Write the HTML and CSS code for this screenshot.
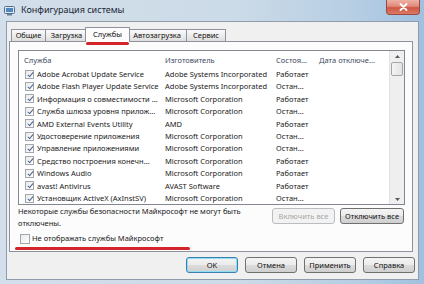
FILE: index.html
```html
<!DOCTYPE html>
<html>
<head>
<meta charset="utf-8">
<link rel="stylesheet" href="styles.css">
</head>
<body>
<div class="window">
  <div class="titlebar">
    <svg class="appicon" width="11" height="10" viewBox="0 0 11 10">
      <rect x="0.5" y="0.5" width="10" height="7" rx="1" fill="#dfe9f3" stroke="#51708f"/>
      <rect x="2" y="2" width="7" height="4" fill="#4f86c0"/>
      <rect x="3" y="8" width="5" height="1.5" fill="#6c7f93"/>
    </svg>
    <span class="title">Конфигурация системы</span>
    <div class="close">
      <svg width="9" height="8" viewBox="0 0 9 8"><path d="M1.5 1 L7.5 7 M7.5 1 L1.5 7" stroke="#ffffff" stroke-width="1.8" stroke-linecap="round"/></svg>
    </div>
  </div>
  <div class="client">
    <div class="tabs">
      <div class="tab t1">Общие</div>
      <div class="tab t2">Загрузка</div>
      <div class="tab t3 active">Службы<span class="mark"></span></div>
      <div class="tab t4">Автозагрузка</div>
      <div class="tab t5">Сервис</div>
    </div>
    <div class="panel">
      <div class="list">
        <div class="list-main">
          <div class="row head">
            <span class="c1">Служба</span><span class="c2">Изготовитель</span><span class="c3">Состоя...</span><span class="c4">Дата отключе...</span>
          </div>
          <div class="rows">
            <div class="row"><span class="c1"><i class="cb"></i>Adobe Acrobat Update Service</span><span class="c2">Adobe Systems Incorporated</span><span class="c3">Работает</span><span class="c4"></span></div>
            <div class="row"><span class="c1"><i class="cb"></i>Adobe Flash Player Update Service</span><span class="c2">Adobe Systems Incorporated</span><span class="c3">Остан...</span><span class="c4"></span></div>
            <div class="row"><span class="c1"><i class="cb"></i>Информация о совместимости ...</span><span class="c2">Microsoft Corporation</span><span class="c3">Работает</span><span class="c4"></span></div>
            <div class="row"><span class="c1"><i class="cb"></i>Служба шлюза уровня прилож...</span><span class="c2">Microsoft Corporation</span><span class="c3">Остан...</span><span class="c4"></span></div>
            <div class="row"><span class="c1"><i class="cb"></i>AMD External Events Utility</span><span class="c2">AMD</span><span class="c3">Работает</span><span class="c4"></span></div>
            <div class="row"><span class="c1"><i class="cb"></i>Удостоверение приложения</span><span class="c2">Microsoft Corporation</span><span class="c3">Остан...</span><span class="c4"></span></div>
            <div class="row"><span class="c1"><i class="cb"></i>Управление приложениями</span><span class="c2">Microsoft Corporation</span><span class="c3">Остан...</span><span class="c4"></span></div>
            <div class="row"><span class="c1"><i class="cb"></i>Средство построения конечн...</span><span class="c2">Microsoft Corporation</span><span class="c3">Работает</span><span class="c4"></span></div>
            <div class="row"><span class="c1"><i class="cb"></i>Windows Audio</span><span class="c2">Microsoft Corporation</span><span class="c3">Работает</span><span class="c4"></span></div>
            <div class="row"><span class="c1"><i class="cb"></i>avast! Antivirus</span><span class="c2">AVAST Software</span><span class="c3">Работает</span><span class="c4"></span></div>
            <div class="row"><span class="c1"><i class="cb"></i>Установщик ActiveX (AxInstSV)</span><span class="c2">Microsoft Corporation</span><span class="c3">Остан...</span><span class="c4"></span></div>
          </div>
        </div>
        <div class="scrollbar">
          <div class="sb-btn up"><svg width="5" height="3" viewBox="0 0 5 3"><path d="M0 3 L2.5 0 L5 3 Z" fill="#5a5a5a"/></svg></div>
          <div class="sb-thumb"></div>
          <div class="sb-track"></div>
          <div class="sb-btn down"><svg width="5" height="3" viewBox="0 0 5 3"><path d="M0 0 L2.5 3 L5 0 Z" fill="#5a5a5a"/></svg></div>
        </div>
      </div>
      <div class="note-row">
        <p class="note">Некоторые службы безопасности Майкрософт не могут быть<br>отключены.</p>
        <button class="btn small" disabled>Включить все</button>
        <button class="btn small">Отключить все</button>
      </div>
      <label class="hide-ms"><i class="cb empty"></i>Не отображать службы Майкрософт</label>
      <div class="redline"></div>
    </div>
    <div class="footer">
      <button class="btn big default">OK</button>
      <button class="btn big">Отмена</button>
      <button class="btn big">Применить</button>
      <button class="btn big">Справка</button>
    </div>
  </div>
</div>
</body>
</html>
```

FILE: styles.css
```css
* { box-sizing: border-box; }
html, body { margin: 0; padding: 0; }
body {
  width: 424px;
  height: 284px;
  overflow: hidden;
  font-family: "Noto Sans", "Open Sans", sans-serif;
  font-size: 7.5px;
  color: #1a1a1a;
}
.window {
  width: 424px;
  height: 284px;
  display: flex;
  flex-direction: column;
  background: linear-gradient(90deg, #d3dfea 0%, #ccdbe8 55%, #b5cde3 85%, #9fc0df 100%);
}
.titlebar {
  height: 21px;
  display: flex;
  align-items: flex-start;
  flex-shrink: 0;
}
.appicon { margin: 6px 0 0 4px; }
.title {
  margin: 3px 0 0 6px;
  font-size: 9px;
  line-height: 14px;
  color: #1b2633;
}
.close {
  margin-left: auto;
  margin-right: 4px;
  width: 34px;
  height: 15px;
  border: 1px solid #9a4a40;
  border-top: none;
  border-radius: 0 0 4px 4px;
  background: linear-gradient(180deg, #eeb2a4 0%, #e08a7a 45%, #cf5643 55%, #dc7a62 100%);
  display: flex;
  align-items: center;
  justify-content: center;
}
.client {
  flex: 1;
  margin: 0 5px 4px 6px;
  border: 1px solid #8e9cab;
  background: #f0f0f0;
  display: flex;
  flex-direction: column;
}
.tabs {
  margin-top: 5px;
  height: 14px;
  padding-left: 4px;
  display: flex;
  align-items: flex-end;
  position: relative;
  z-index: 1;
}
.tab {
  height: 12px;
  border: 1px solid #8d929c;
  border-bottom: none;
  border-right: none;
  background: linear-gradient(180deg, #fafafa 0%, #ececec 50%, #dedede 100%);
  line-height: 11px;
  text-align: center;
  color: #111;
  white-space: nowrap;
}
.t1 { width: 34px; }
.t2 { width: 42px; }
.t4 { width: 58px; border-left: none; }
.t5 { width: 40px; border-right: 1px solid #8d929c; }
.tab.active {
  width: 45px;
  height: 15px;
  margin: 0 -2px -1px -2px;
  background: #fcfcfc;
  border-right: 1px solid #8d929c;
  line-height: 13px;
  position: relative;
  z-index: 2;
}
.mark {
  position: absolute;
  left: 0;
  top: 14px;
  width: 43px;
  height: 3px;
  border-radius: 2px;
  background: #d3232b;
}
.panel {
  margin: 0 5px 0 2px;
  border: 1px solid #8d929c;
  background: #fcfcfc;
  padding: 8px 7px 1px 8px;
  display: flex;
  flex-direction: column;
}
.list {
  height: 155px;
  border: 1px solid #828790;
  background: #ffffff;
  display: flex;
  overflow: hidden;
}
.list-main { flex: 1; overflow: hidden; }
.row {
  display: flex;
  height: 12.4px;
  line-height: 12.4px;
  white-space: nowrap;
}
.row.head {
  height: 17px;
  line-height: 17px;
  padding-top: 1px;
  color: #3e4b5e;
}
.rows { overflow: hidden; height: 136.4px; }
.c1 { width: 145px; padding-left: 6px; display: flex; align-items: center; overflow: hidden; }
.head .c1 { padding-left: 5px; }
.c2 { width: 111px; padding-left: 1px; overflow: hidden; }
.c3 { width: 43px; padding-left: 1px; overflow: hidden; }
.c4 { flex: 1; padding-left: 1px; overflow: hidden; }
.cb {
  display: inline-block;
  width: 9px;
  height: 9px;
  border: 1px solid #a3a8ae;
  background: linear-gradient(135deg, #e9e9e9 0%, #ffffff 100%);
  margin-right: 3px;
  flex-shrink: 0;
  position: relative;
}
.cb::after {
  content: "";
  position: absolute;
  left: 2.5px;
  top: 0px;
  width: 2px;
  height: 5px;
  border: solid #4a6690;
  border-width: 0 1.2px 1.2px 0;
  transform: rotate(40deg);
}
.cb.empty::after { display: none; }
.scrollbar {
  width: 15px;
  display: flex;
  flex-direction: column;
  background: #efefef;
  border-left: 1px solid #e2e2e2;
}
.sb-btn {
  height: 11px;
  display: flex;
  align-items: center;
  justify-content: center;
}
.sb-thumb {
  height: 14px;
  margin: 0 1px;
  border: 1px solid #a5a5a5;
  border-radius: 2px;
  background: linear-gradient(90deg, #f4f4f4 0%, #e3e3e3 100%);
}
.sb-track { flex: 1; }
.sb-btn.down { height: 10px; }
.note-row {
  display: flex;
  align-items: flex-start;
  margin-right: 1px;
  height: 24px;
}
.note {
  margin: 0;
  flex: 1;
  line-height: 12px;
  white-space: nowrap;
  color: #1a1a1a;
}
.btn {
  font-family: "Noto Sans", "Open Sans", sans-serif;
  font-size: 7.5px;
  color: #111;
  padding: 0;
  border: 1px solid #707070;
  border-radius: 3px;
  background: linear-gradient(180deg, #f4f4f4 0%, #ebebeb 48%, #dcdcdc 52%, #cfcfcf 100%);
  line-height: 14px;
  text-align: center;
  white-space: nowrap;
}
.btn.small {
  height: 16px;
  margin-top: 3px;
}
.btn.small:nth-of-type(1) { width: 63px; }
.btn.small:nth-of-type(2) { width: 64px; margin-left: 5px; }
.btn[disabled] {
  color: #a6a6a6;
  border-color: #b9bdc1;
  background: #f2f2f2;
}
.hide-ms {
  display: flex;
  align-items: center;
  height: 13px;
  margin: 3px 0 0 2px;
  line-height: 13px;
}
.hide-ms .cb { width: 10px; height: 10px; margin-right: 2px; }
.redline {
  margin: 2px 0 0 -3px;
  width: 175px;
  height: 3px;
  border-radius: 2px;
  background: #d3232b;
}
.footer {
  display: flex;
  justify-content: flex-end;
  gap: 7px;
  padding: 5px 3px 0 0;
}
.btn.big {
  width: 52px;
  height: 16px;
}
.btn.default {
  border-color: #3c7fb1;
  box-shadow: inset 0 0 0 1px #8fdcf5;
}
```
